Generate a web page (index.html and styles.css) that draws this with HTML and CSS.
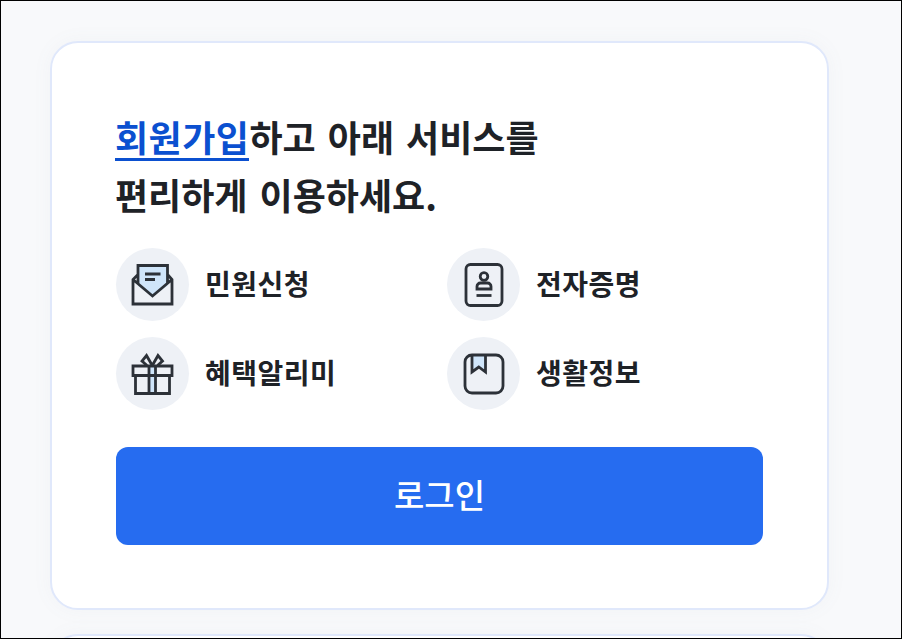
FILE: index.html
```html
<!DOCTYPE html>
<html lang="ko">
<head>
    <meta charset="UTF-8">
    <title>로그인 안내</title>
    <link rel="stylesheet" href="styles.css">
</head>
<body>
    <div class="page">
        <section class="card">
            <h2 class="title"><a class="title_link" href="#">회원가입</a>하고 아래 서비스를<br>편리하게 이용하세요.</h2>
            <ul class="services">
                <li class="service">
                    <span class="service_icon">
                        <svg class="icon" viewBox="0 0 44 44">
                            <path class="fill" d="M7 23V2.500h29.500V23L21.500 33z"/>
                            <path class="line" d="M7 11.500 2 16.500V41h39V16.500L36.500 11.500M2 16.500 21.500 33 41 16.500M7 20V2.500h29.500V20"/>
                            <path class="line" d="M14 11h15.500M14 16.500h10"/>
                        </svg>
                    </span>
                    <span class="service_name">민원신청</span>
                </li>
                <li class="service">
                    <span class="service_icon">
                        <svg class="icon" viewBox="0 0 44 44">
                            <rect class="line" x="4" y="1.500" width="36" height="41" rx="4.500"/>
                            <circle class="line" cx="22" cy="13.500" r="3.800"/>
                            <path class="line" d="M15 26v-2.500c0-2 1.500-3.500 3.500-3.500h7c2 0 3.500 1.500 3.500 3.500V26z"/>
                            <path class="line" d="M14.500 32.500h15"/>
                        </svg>
                    </span>
                    <span class="service_name">전자증명</span>
                </li>
                <li class="service">
                    <span class="service_icon">
                        <svg class="icon" viewBox="0 0 44 44">
                            <rect class="fill" x="18" y="14" width="6.500" height="27"/>
                            <path class="line" d="M2 14h39v9.500H2zM4.500 23.500V41.500h34V23.500M18 14v27.500M24.500 14v27.500"/>
                            <path class="line" d="M21.300 13.500 15.500 3.500 11 9l5 4.500M21.300 13.500 27 3.500 31.500 9l-5 4.500"/>
                        </svg>
                    </span>
                    <span class="service_name">혜택알리미</span>
                </li>
                <li class="service">
                    <span class="service_icon">
                        <svg class="icon" viewBox="0 0 44 44">
                            <path class="fill" d="M10 3h13.500v17l-6.700-5-6.800 5z"/>
                            <rect class="line" x="3" y="3" width="38" height="38" rx="7"/>
                            <path class="line" d="M10 3v17l6.800-5 6.700 5V3"/>
                        </svg>
                    </span>
                    <span class="service_name">생활정보</span>
                </li>
            </ul>
            <button class="login" type="button">로그인</button>
        </section>
        <section class="card"></section>
    </div>
</body>
</html>
```
FILE: styles.css
```css
html, body {
    margin: 0;
    padding: 0;
}
body {
    font-family: "Noto Sans CJK KR", "Noto Sans", sans-serif;
    color: #1e2227;
}
.page {
    box-sizing: border-box;
    width: 902px;
    height: 639px;
    padding: 40px 72px 0 49px;
    overflow: hidden;
    background-color: #f8f9fb;
    border: 1px solid #000;
}
.card {
    box-sizing: border-box;
    height: 569px;
    margin-bottom: 24px;
    padding: 64px 64px 0;
    background-color: #fff;
    border: 2px solid #e0e8fb;
    border-radius: 28px;
    box-shadow: 0 0 20px rgba(120, 130, 150, 0.05);
}
.title {
    margin: 0 0 0 -1px;
    font-size: 36px;
    font-weight: 700;
    line-height: 58px;
    word-spacing: 2px;
}
.title_link {
    display: inline-block;
    height: 51px;
    line-height: 59px;
    letter-spacing: 0.5px;
    color: #0b50d0;
    text-decoration: none;
    border-bottom: 3px solid #0b50d0;
}
.services {
    display: grid;
    grid-template-columns: 1fr 1fr;
    gap: 16px 15px;
    margin: 25px 0 37px;
    padding: 0;
    list-style: none;
}
.service {
    display: flex;
    align-items: center;
    gap: 16px;
}
.service_icon {
    display: flex;
    align-items: center;
    justify-content: center;
    width: 73px;
    height: 73px;
    border-radius: 50%;
    background-color: #eef1f6;
}
.icon {
    width: 44px;
    height: 44px;
}
.line {
    fill: none;
    stroke: #2c3138;
    stroke-width: 2.800;
}
.fill {
    fill: #cfe5fa;
}
.service_name {
    padding-bottom: 4px;
    font-size: 28px;
    font-weight: 700;
    letter-spacing: 0.5px;
}
.login {
    display: block;
    width: 100%;
    height: 98px;
    padding: 0 0 4px;
    font-family: inherit;
    font-size: 33px;
    font-weight: 500;
    color: #fff;
    background-color: #266cf0;
    border: none;
    border-radius: 12px;
}
```
